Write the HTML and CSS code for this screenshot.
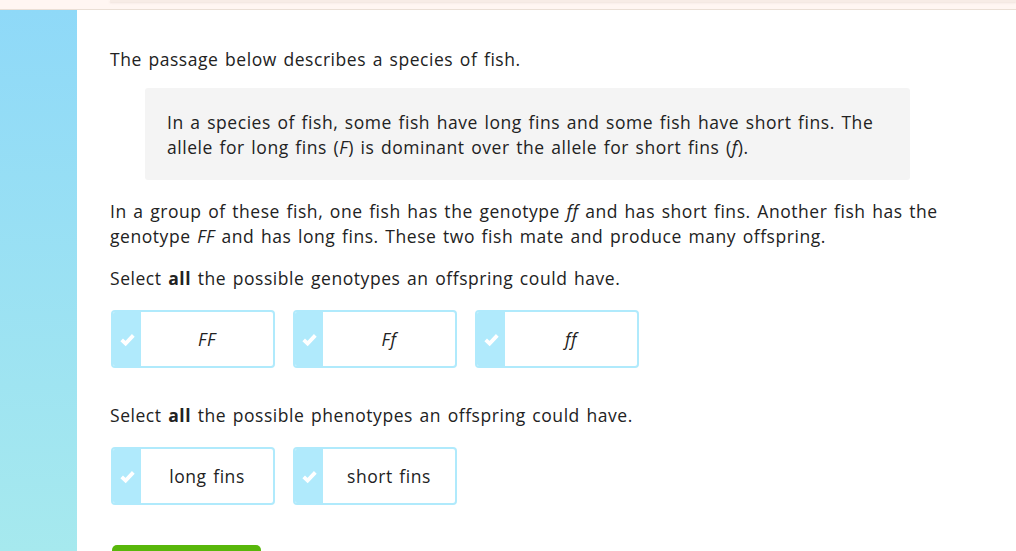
FILE: index.html
```html
<!DOCTYPE html>
<html>
<head>
<meta charset="utf-8">
<link rel="stylesheet" href="styles.css">
</head>
<body>
<div class="topbar"><div class="topbar-inner"></div></div>
<div class="page">
  <aside class="sidebar"></aside>
  <main class="content">
    <p class="intro">The passage below describes a species of fish.</p>
    <div class="passage">
      <p>In a species of fish, some fish have long fins and some fish have short fins. The allele for long fins (<i>F</i>) is dominant over the allele for short fins (<i>f</i>).</p>
    </div>
    <p class="para">In a group of these fish, one fish has the genotype <i>ff</i> and has short fins. Another fish has the genotype <i>FF</i> and has long fins. These two fish mate and produce many offspring.</p>
    <p class="prompt">Select <b>all</b> the possible genotypes an offspring could have.</p>
    <div class="choices">
      <div class="choice"><span class="check"><svg class="tick" viewBox="0 0 16 16"><path d="M1.8 8.4 L6 12.4 L14.2 3.6" fill="none" stroke="#ffffff" stroke-width="4"/></svg></span><span class="label"><i>FF</i></span></div>
      <div class="choice"><span class="check"><svg class="tick" viewBox="0 0 16 16"><path d="M1.8 8.4 L6 12.4 L14.2 3.6" fill="none" stroke="#ffffff" stroke-width="4"/></svg></span><span class="label"><i>Ff</i></span></div>
      <div class="choice"><span class="check"><svg class="tick" viewBox="0 0 16 16"><path d="M1.8 8.4 L6 12.4 L14.2 3.6" fill="none" stroke="#ffffff" stroke-width="4"/></svg></span><span class="label"><i>ff</i></span></div>
    </div>
    <p class="prompt prompt2">Select <b>all</b> the possible phenotypes an offspring could have.</p>
    <div class="choices">
      <div class="choice"><span class="check"><svg class="tick" viewBox="0 0 16 16"><path d="M1.8 8.4 L6 12.4 L14.2 3.6" fill="none" stroke="#ffffff" stroke-width="4"/></svg></span><span class="label">long fins</span></div>
      <div class="choice"><span class="check"><svg class="tick" viewBox="0 0 16 16"><path d="M1.8 8.4 L6 12.4 L14.2 3.6" fill="none" stroke="#ffffff" stroke-width="4"/></svg></span><span class="label">short fins</span></div>
    </div>
    <div class="submit"></div>
  </main>
</div>
</body>
</html>
```
FILE: styles.css
```css
html, body {
  margin: 0;
  padding: 0;
  height: 100%;
  overflow: hidden;
  background: #fff;
}
body {
  font-family: "Open Sans", "Noto Sans", sans-serif;
  font-size: 17.5px;
  letter-spacing: 0.55px;
  word-spacing: 1.5px;
  font-variant-ligatures: none;
  line-height: 25px;
  color: #222;
}
.topbar {
  height: 9px;
  background: #fff6f2;
  border-bottom: 1px solid #eadfd5;
  display: flex;
}
.topbar-inner {
  margin-left: 110px;
  flex: 1;
  height: 2px;
  background: #f7ece6;
  box-shadow: 0 1px 2px rgba(200, 180, 170, 0.3);
}
.page {
  display: flex;
  height: calc(100% - 10px);
}
.sidebar {
  width: 77px;
  flex: none;
  background: linear-gradient(to bottom, #8fd9f8, #a6e9ee);
}
.content {
  width: 835px;
  margin-left: 33px;
  padding-top: 37px;
}
p { margin: 0; }
.intro { margin-bottom: 16px; }
.passage {
  margin: 0 35px;
  background: #f4f4f4;
  border-radius: 3px;
  padding: 22px 22px 20px;
}
.para { margin-top: 19px; }
.prompt { margin-top: 17px; }
.prompt2 { margin-top: 35px; }
.choices {
  display: flex;
  gap: 18px;
  margin-top: 19px;
  padding-left: 1px;
}
.choice {
  width: 164px;
  height: 58px;
  box-sizing: border-box;
  border: 2px solid #b0eafc;
  border-radius: 4px;
  display: flex;
  overflow: hidden;
}
.check {
  width: 28px;
  flex: none;
  background: #b0eafc;
  display: flex;
  align-items: center;
  justify-content: center;
}
.tick {
  width: 15px;
  height: 15px;
  display: block;
}
.label {
  flex: 1;
  display: flex;
  align-items: center;
  justify-content: center;
  color: #222;
}
.submit {
  margin-top: 40px;
  margin-left: 2px;
  width: 149px;
  height: 20px;
  background: #58b70a;
  border-radius: 5px 5px 0 0;
}
```
